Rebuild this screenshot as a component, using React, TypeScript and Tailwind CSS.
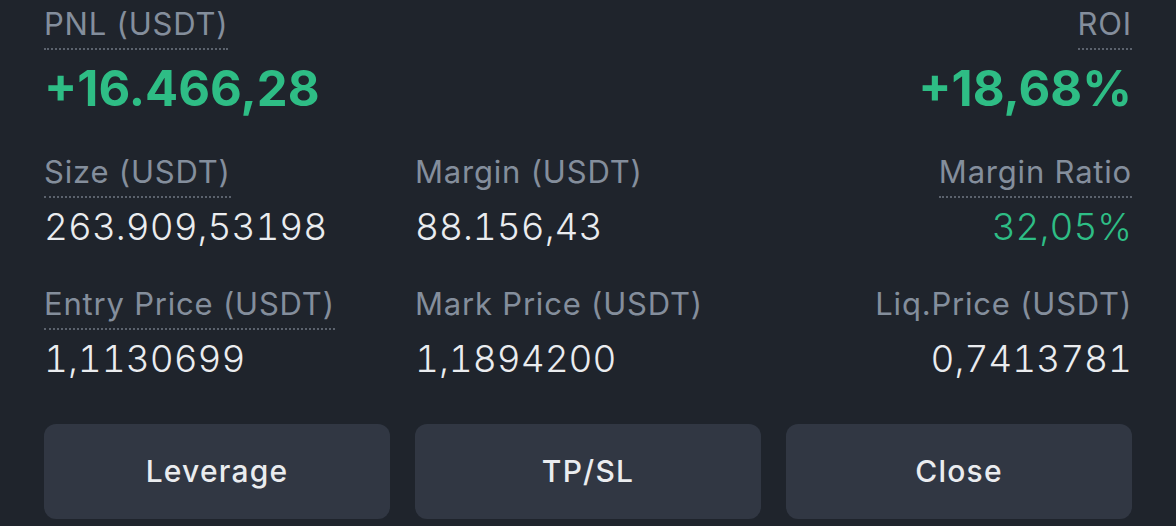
import React from "react";

const font = { fontFamily: "Inter, 'Noto Sans', sans-serif" };

const Label = ({ text, dotted, right }: { text: string; dotted?: boolean; right?: boolean }) => (
  <div className={right ? "flex justify-end" : "flex"}>
    <span
      className={
        "block text-[31px] leading-[38px] text-[#848e9c] tracking-[0.8px] pb-[5px] " +
        (dotted ? "border-b-2 border-dotted border-[#5b626d]" : "border-b-2 border-transparent")
      }
    >
      {text}
    </span>
  </div>
);

const Cell = ({
  label,
  value,
  dotted,
  right,
  green,
}: {
  label: string;
  value: string;
  dotted?: boolean;
  right?: boolean;
  green?: boolean;
}) => (
  <div className={right ? "text-right" : ""}>
    <Label text={label} dotted={dotted} right={right} />
    <div
      className={
        "mt-[8px] text-[37px] leading-[41px] font-light tabular-nums " +
        (green ? "text-[#2ebd85]" : "text-[#eaecef]")
      }
    >
      {value}
    </div>
  </div>
);

export default function App() {
  return (
    <div className="w-[1176px] h-[526px] bg-[#1f242c] px-[44px] pt-[5px] overflow-hidden" style={font}>
      {/* pnl / roi */}
      <div className="flex justify-between">
        <div>
          <Label text="PNL (USDT)" dotted />
          <div className="mt-[9px] text-[49px] leading-[60px] font-bold text-[#2ebd85]">+16.466,28</div>
        </div>
        <div className="text-right">
          <Label text="ROI" dotted right />
          <div className="mt-[9px] text-[49px] leading-[60px] font-bold text-[#2ebd85]">+18,68%</div>
        </div>
      </div>

      <div className="grid grid-cols-3 gap-x-[25px] mt-[34px]">
        <Cell label="Size (USDT)" value="263.909,53198" dotted />
        <Cell label="Margin (USDT)" value="88.156,43" />
        <Cell label="Margin Ratio" value="32,05%" dotted right green />
      </div>

      <div className="grid grid-cols-3 gap-x-[25px] mt-[38px]">
        <Cell label="Entry Price (USDT)" value="1,1130699" dotted />
        <Cell label="Mark Price (USDT)" value="1,1894200" />
        <Cell label="Liq.Price (USDT)" value="0,7413781" right />
      </div>

      <div className="grid grid-cols-3 gap-x-[25px] mt-[45px]">
        {["Leverage", "TP/SL", "Close"].map((b) => (
          <button
            key={b}
            className="h-[95px] rounded-[12px] bg-[#313743] text-[30px] font-medium tracking-[1.2px] text-[#eaecef]"
          >
            {b}
          </button>
        ))}
      </div>
    </div>
  );
}
